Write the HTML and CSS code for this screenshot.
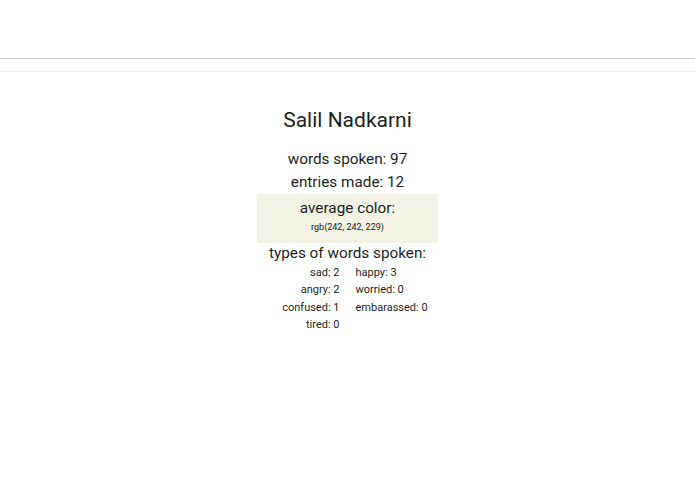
FILE: index.html
```html
<!DOCTYPE html>
<html lang="en">
<head>
    <meta charset="UTF-8">
    <meta name="viewport" content="width=device-width, initial-scale=1.0">
    <title>Salil Nadkarni</title>
    <link rel="stylesheet" href="styles.css">
</head>
<body>

<div class="topbar"></div>
<div class="subbar"></div>

<div class="profile">
    <div class="name">Salil Nadkarni</div>
    <div class="stat">words spoken: 97</div>
    <div class="stat">entries made: 12</div>
    <div class="avg-box">
        <div class="avg-title">average color:</div>
        <div class="avg-value">rgb(242, 242, 229)</div>
    </div>
    <div class="types-title">types of words spoken:</div>
    <div class="types">
        <div class="left">sad: 2</div><div class="right">happy: 3</div>
        <div class="left">angry: 2</div><div class="right">worried: 0</div>
        <div class="left">confused: 1</div><div class="right">embarassed: 0</div>
        <div class="left">tired: 0</div><div class="right"></div>
    </div>
</div>

</body>
</html>
```

FILE: styles.css
```css
body {
    font-family: Roboto, "Noto Sans", sans-serif;
    background-color: #FFFFFF;
    color: #1d1f22;
    margin: 0;
}
.topbar {
    height: 58px;
    border-bottom: 1px solid #CCCCCC;
}
.subbar {
    height: 12px;
    border-bottom: 1px solid #F0F0F0;
}
.profile {
    display: flex;
    flex-direction: column;
    align-items: center;
    padding-top: 36px;
}
.name {
    font-size: 21px;
    margin-bottom: 16px;
}
.stat {
    font-size: 15.3px;
    line-height: 23px;
}
.avg-box {
    background-color: rgb(242, 242, 229);
    width: 181px;
    height: 49px;
    margin-top: 0;
    text-align: center;
    box-sizing: border-box;
    padding-top: 3px;
}
.avg-title {
    font-size: 15.3px;
    line-height: 22px;
}
.avg-value {
    font-size: 9px;
    line-height: 17px;
}
.types-title {
    font-size: 15.3px;
    line-height: 20px;
}
.types {
    display: grid;
    grid-template-columns: 80px 80px;
    column-gap: 16px;
    font-size: 11px;
    line-height: 17.4px;
    margin-top: 1px;
}
.left {
    text-align: right;
}
.right {
    text-align: left;
}
```
